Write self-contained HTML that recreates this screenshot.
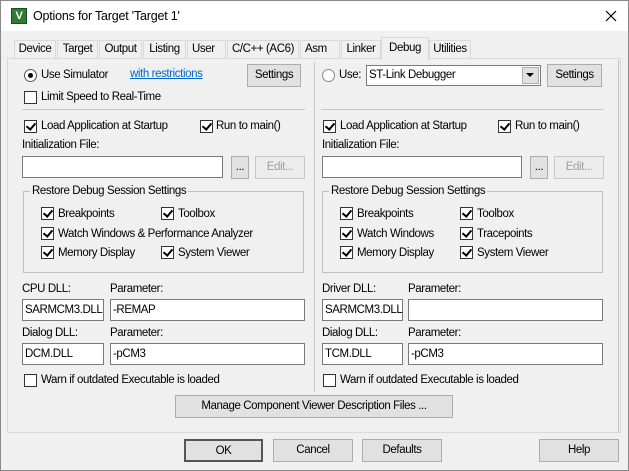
<!DOCTYPE html>
<html><head><style>
*{margin:0;padding:0;box-sizing:border-box}
body{width:629px;height:471px;background:#f0f0f0;font-family:"Liberation Sans",sans-serif;font-size:11.5px;color:#000;position:relative;overflow:hidden;letter-spacing:-0.4px}
.a{position:absolute;white-space:nowrap;line-height:14px}
.cb{position:absolute;width:13px;height:13px;background:#fff;border:1px solid #333}
.cb.k::after{content:"";position:absolute;left:3px;top:0px;width:4px;height:7px;border:solid #000;border-width:0 2px 2px 0;transform:rotate(40deg)}
.in{position:absolute;background:#fff;border:1px solid #7a7a7a;height:22px;line-height:20px;padding-left:2px}
.bt{position:absolute;background:#e1e1e1;border:1px solid #adadad;text-align:center;line-height:20px;height:23px}
.tab{position:absolute;top:40px;height:19px;border:1px solid #d9d9d9;border-bottom:none;background:#f0f0f0;line-height:17px;text-align:center}
.ln{position:absolute;background:#a0a0a0}
</style></head><body>
<div style="position:absolute;left:0;top:0;width:629px;height:31px;background:#fff"></div>
<div style="position:absolute;left:0;top:0;width:629px;height:471px;border:1px solid #888"></div>
<div style="position:absolute;left:11px;top:8px;width:16px;height:16px;background:#2e7d32;border:1px solid #1b4d1e;color:#fff;font-size:11px;font-weight:bold;line-height:14px;text-align:center">V</div>
<div class="a" style="left:33px;top:9px;font-size:12.5px;letter-spacing:-0.2px">Options for Target 'Target 1'</div>
<svg style="position:absolute;left:605px;top:10px" width="12" height="12"><path d="M1 1L11 11M11 1L1 11" stroke="#000" stroke-width="1.2"/></svg>

<div class="tab" style="left:14px;width:42px">Device</div>
<div class="tab" style="left:57px;width:41px">Target</div>
<div class="tab" style="left:99px;width:43px">Output</div>
<div class="tab" style="left:143px;width:43px">Listing</div>
<div class="tab" style="left:187px;width:39px;text-align:left;padding-left:4px">User</div>
<div class="tab" style="left:227px;width:72px">C/C++ (AC6)</div>
<div class="tab" style="left:300px;width:40px;text-align:left;padding-left:4px">Asm</div>
<div class="tab" style="left:341px;width:40px">Linker</div>
<div class="tab" style="left:429px;width:42px">Utilities</div>
<div style="position:absolute;left:7px;top:58px;width:614px;height:375px;border:1px solid #d9d9d9;background:#f0f0f0"></div>
<div class="tab" style="left:381px;top:37px;height:23px;width:48px;background:#f0f0f0;line-height:20px">Debug</div>
<div class="ln" style="left:618px;top:60px;width:1px;height:372px;background:#c0c0c0"></div>

<div class="ln" style="left:314px;top:62px;width:1px;height:330px;background:#c8c8c8"></div>

<!-- LEFT -->
<div style="position:absolute;left:24px;top:69px;width:13px;height:13px;border-radius:50%;background:#fff;border:1px solid #555"></div>
<div style="position:absolute;left:28px;top:73px;width:5px;height:5px;border-radius:50%;background:#000"></div>
<div class="a" style="left:41px;top:68px">Use Simulator</div>
<div class="a" style="left:130px;top:67px;color:#0066cc;text-decoration:underline">with restrictions</div>
<div class="bt" style="left:247px;top:64px;width:54px">Settings</div>
<div class="cb" style="left:24px;top:91px"></div>
<div class="a" style="left:41px;top:90px">Limit Speed to Real-Time</div>
<div class="ln" style="left:22px;top:109px;width:283px;height:1px;background:#c8c8c8"></div>
<div class="cb k" style="left:24px;top:120px"></div>
<div class="a" style="left:41px;top:119px">Load Application at Startup</div>
<div class="cb k" style="left:200px;top:120px"></div>
<div class="a" style="left:216px;top:119px">Run to main()</div>
<div class="a" style="left:22px;top:138px">Initialization File:</div>
<div class="in" style="left:22px;top:156px;width:201px"></div>
<div class="bt" style="left:231px;top:156px;width:18px">...</div>
<div class="bt" style="left:255px;top:156px;width:50px;color:#a0a0a0;background:#ececec;border-color:#c8c8c8">Edit...</div>
<div style="position:absolute;left:23px;top:191px;width:281px;height:82px;border:1px solid #c0c0c0"></div>
<div class="a" style="left:30px;top:184px;background:#f0f0f0;padding:0 2px">Restore Debug Session Settings</div>
<div class="cb k" style="left:41px;top:207px"></div><div class="a" style="left:58px;top:207px">Breakpoints</div>
<div class="cb k" style="left:161px;top:207px"></div><div class="a" style="left:178px;top:207px">Toolbox</div>
<div class="cb k" style="left:41px;top:227px"></div><div class="a" style="left:58px;top:227px">Watch Windows &amp; Performance Analyzer</div>
<div class="cb k" style="left:41px;top:246px"></div><div class="a" style="left:58px;top:246px">Memory Display</div>
<div class="cb k" style="left:161px;top:246px"></div><div class="a" style="left:178px;top:246px">System Viewer</div>
<div class="a" style="left:22px;top:282px">CPU DLL:</div>
<div class="a" style="left:110px;top:282px">Parameter:</div>
<div class="in" style="left:22px;top:299px;width:82px">SARMCM3.DLL</div>
<div class="in" style="left:110px;top:299px;width:195px">-REMAP</div>
<div class="a" style="left:22px;top:326px">Dialog DLL:</div>
<div class="a" style="left:110px;top:326px">Parameter:</div>
<div class="in" style="left:22px;top:343px;width:82px">DCM.DLL</div>
<div class="in" style="left:110px;top:343px;width:195px">-pCM3</div>
<div class="cb" style="left:24px;top:374px"></div>
<div class="a" style="left:41px;top:373px">Warn if outdated Executable is loaded</div>

<!-- RIGHT -->
<div style="position:absolute;left:322px;top:69px;width:13px;height:13px;border-radius:50%;background:#fff;border:1px solid #888"></div>
<div class="a" style="left:339px;top:68px">Use:</div>
<div class="in" style="left:366px;top:65px;width:175px;height:21px;line-height:19px">ST-Link Debugger</div>
<div style="position:absolute;left:522px;top:67px;width:17px;height:17px;background:#e1e1e1;border:1px solid #adadad"></div>
<svg style="position:absolute;left:526px;top:73px" width="9" height="5"><path d="M0 0H8L4 4Z" fill="#000"/></svg>
<div class="bt" style="left:547px;top:64px;width:55px">Settings</div>
<div class="ln" style="left:321px;top:109px;width:283px;height:1px;background:#c8c8c8"></div>
<div class="cb k" style="left:323px;top:120px"></div>
<div class="a" style="left:340px;top:119px">Load Application at Startup</div>
<div class="cb k" style="left:498px;top:120px"></div>
<div class="a" style="left:515px;top:119px">Run to main()</div>
<div class="a" style="left:322px;top:138px">Initialization File:</div>
<div class="in" style="left:322px;top:156px;width:200px"></div>
<div class="bt" style="left:530px;top:156px;width:18px">...</div>
<div class="bt" style="left:554px;top:156px;width:50px;color:#a0a0a0;background:#ececec;border-color:#c8c8c8">Edit...</div>
<div style="position:absolute;left:322px;top:191px;width:281px;height:82px;border:1px solid #c0c0c0"></div>
<div class="a" style="left:329px;top:184px;background:#f0f0f0;padding:0 2px">Restore Debug Session Settings</div>
<div class="cb k" style="left:340px;top:207px"></div><div class="a" style="left:357px;top:207px">Breakpoints</div>
<div class="cb k" style="left:460px;top:207px"></div><div class="a" style="left:477px;top:207px">Toolbox</div>
<div class="cb k" style="left:340px;top:227px"></div><div class="a" style="left:357px;top:227px">Watch Windows</div>
<div class="cb k" style="left:460px;top:227px"></div><div class="a" style="left:477px;top:227px">Tracepoints</div>
<div class="cb k" style="left:340px;top:246px"></div><div class="a" style="left:357px;top:246px">Memory Display</div>
<div class="cb k" style="left:460px;top:246px"></div><div class="a" style="left:477px;top:246px">System Viewer</div>
<div class="a" style="left:322px;top:282px">Driver DLL:</div>
<div class="a" style="left:408px;top:282px">Parameter:</div>
<div class="in" style="left:322px;top:299px;width:81px">SARMCM3.DLL</div>
<div class="in" style="left:408px;top:299px;width:195px"></div>
<div class="a" style="left:322px;top:326px">Dialog DLL:</div>
<div class="a" style="left:408px;top:326px">Parameter:</div>
<div class="in" style="left:322px;top:343px;width:81px">TCM.DLL</div>
<div class="in" style="left:408px;top:343px;width:195px">-pCM3</div>
<div class="cb" style="left:323px;top:374px"></div>
<div class="a" style="left:340px;top:373px">Warn if outdated Executable is loaded</div>

<div class="bt" style="left:175px;top:395px;width:278px">Manage Component Viewer Description Files ...</div>

<div class="bt" style="left:184px;top:439px;width:79px;border:2px solid #555">OK</div>
<div class="bt" style="left:273px;top:439px;width:80px">Cancel</div>
<div class="bt" style="left:362px;top:439px;width:80px">Defaults</div>
<div class="bt" style="left:539px;top:439px;width:80px">Help</div>
</body></html>
